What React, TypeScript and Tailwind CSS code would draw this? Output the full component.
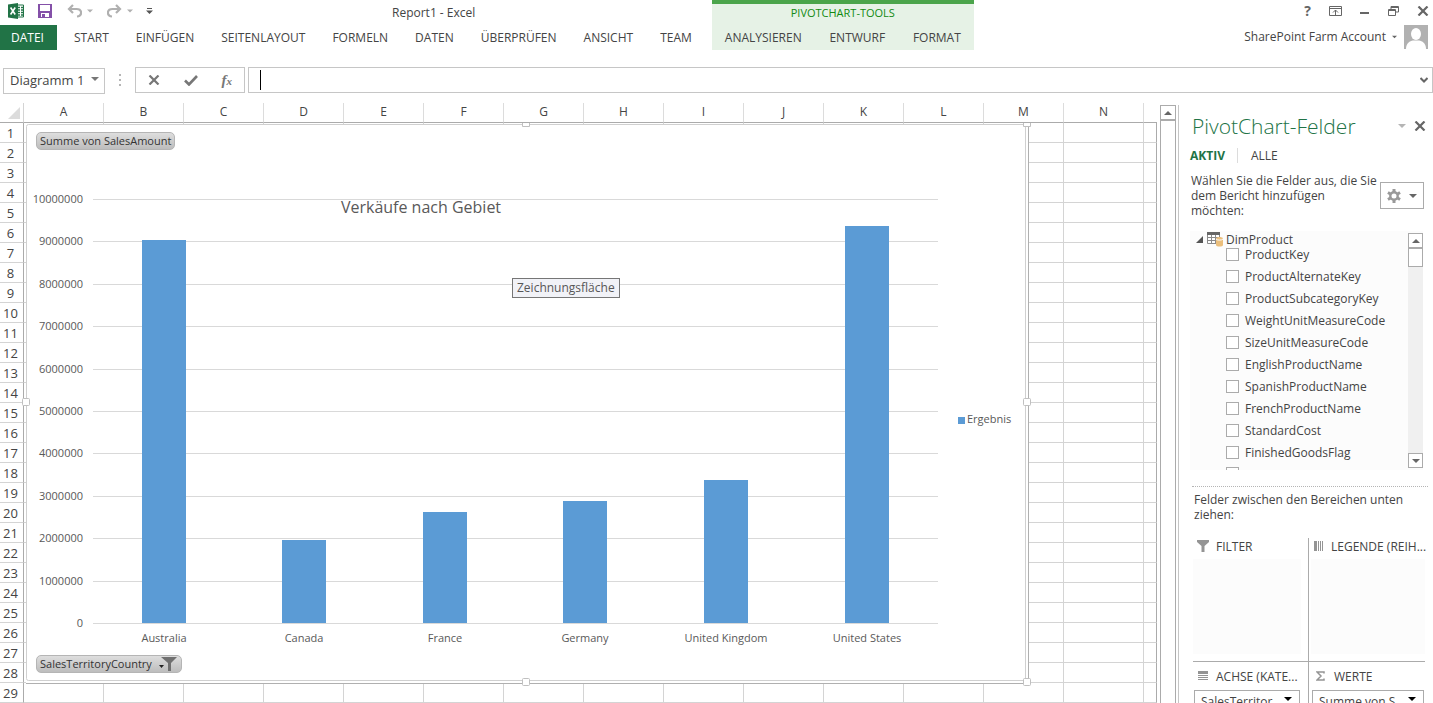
import type { ReactNode } from "react";

const ribbonTabs = ["START", "EINFÜGEN", "SEITENLAYOUT", "FORMELN", "DATEN", "ÜBERPRÜFEN", "ANSICHT", "TEAM"];
const toolTabs = ["ANALYSIEREN", "ENTWURF", "FORMAT"];
const columns = "ABCDEFGHIJKLMN".split("");
const rows = Array.from({ length: 29 }, (_, i) => i + 1);

const fields = [
  "ProductKey",
  "ProductAlternateKey",
  "ProductSubcategoryKey",
  "WeightUnitMeasureCode",
  "SizeUnitMeasureCode",
  "EnglishProductName",
  "SpanishProductName",
  "FrenchProductName",
  "StandardCost",
  "FinishedGoodsFlag",
];

const sales = [
  { country: "Australia", amount: 9040000 },
  { country: "Canada", amount: 1960000 },
  { country: "France", amount: 2620000 },
  { country: "Germany", amount: 2880000 },
  { country: "United Kingdom", amount: 3380000 },
  { country: "United States", amount: 9370000 },
];

function Caret({ className = "" }: { className?: string }) {
  return (
    <svg width="8" height="4" viewBox="0 0 8 4" className={className} aria-hidden="true">
      <path d="M0 0h8L4 4z" fill="currentColor" />
    </svg>
  );
}

function CloseIcon() {
  return (
    <svg width="12" height="10" viewBox="0 0 12 10" aria-hidden="true">
      <path d="M1.5 0.5l9 9M10.5 0.5l-9 9" stroke="currentColor" strokeWidth="2.2" />
    </svg>
  );
}

function QuickAccess() {
  return (
    <div className="flex items-center">
      <svg width="16" height="16" viewBox="0 0 16 16" aria-label="Excel">
        <path d="M9 2h6.5v12H9z" fill="#fff" stroke="#217346" />
        <path d="M10 4.5h2M13 4.5h2M10 7h2M13 7h2M10 9.5h2M13 9.5h2M10 12h2M13 12h2" stroke="#217346" strokeWidth="1.3" />
        <path d="M0 1.6L10 0v16L0 14.4z" fill="#217346" />
        <path d="M2.6 4.5l4.6 7M7.2 4.5l-4.6 7" stroke="#fff" strokeWidth="1.6" />
      </svg>
      <button aria-label="Speichern" className="ml-[14px]">
        <svg width="14" height="14" viewBox="0 0 14 14">
          <path d="M0 0h14v14H0z" fill="#8450a8" />
          <path d="M2 1h10v6H2zM3 9h8v4H3z" fill="#fff" />
          <path d="M4 10h3v3H4z" fill="#8450a8" />
        </svg>
      </button>
      <button aria-label="Rückgängig" className="ml-[15px] flex items-center gap-[5px] text-[#b0b0b0]">
        <svg width="15" height="14" viewBox="0 0 15 14">
          <path d="M6 1L2 5l4 4M2 5h7.5c6 0 6 7 0.500 7.5" fill="none" stroke="currentColor" strokeWidth="2.2" />
        </svg>
        <Caret className="w-[6px]" />
      </button>
      <button aria-label="Wiederholen" className="ml-[14px] flex items-center gap-[5px] text-[#b0b0b0]">
        <svg width="15" height="14" viewBox="0 0 15 14">
          <path d="M9 1l4 4-4 4M13 5H5.5c-6 0-6 7-0.500 7.5" fill="none" stroke="currentColor" strokeWidth="2.2" />
        </svg>
        <Caret className="w-[6px]" />
      </button>
      <button aria-label="Symbolleiste anpassen" className="ml-[13px] text-[#555]">
        <svg width="7" height="6" viewBox="0 0 7 6">
          <path d="M1 0h5v1H1zM0 2.5h7L3.5 6z" fill="currentColor" />
        </svg>
      </button>
    </div>
  );
}

function WindowButtons() {
  return (
    <div className="flex h-[22px] items-center justify-end gap-[18px] pr-[4px] text-[#666]">
      <button aria-label="Hilfe" className="text-[14px] leading-4 font-bold">?</button>
      <button aria-label="Menüband-Anzeigeoptionen">
        <svg width="13" height="10" viewBox="0 0 13 10" fill="none" stroke="currentColor">
          <path d="M0.5 0.5h12v9H0.5zM0.5 2.5h12M6.5 9V4M4 6.5L6.5 4 9 6.5" />
        </svg>
      </button>
      <button aria-label="Minimieren">
        <svg width="10" height="10" viewBox="0 0 10 10">
          <path d="M0 6h9v2H0z" fill="currentColor" />
        </svg>
      </button>
      <button aria-label="Verkleinern">
        <svg width="11" height="10" viewBox="0 0 11 10" fill="none" stroke="currentColor">
          <path d="M3 3V0.5h7.5v5.5H8M3 1.5h7.5M0.5 3.5h7v6h-7zM0.5 4.5h7" />
        </svg>
      </button>
      <button aria-label="Schließen">
        <CloseIcon />
      </button>
    </div>
  );
}

function Header() {
  return (
    <header className="flex h-[50px] shrink-0 text-[12px] text-[#444]">
      <div className="flex flex-col">
        <div className="flex h-[25px] items-center pb-[3px] pl-2">
          <QuickAccess />
          <h1 className="ml-[239px] pt-1">Report1 - Excel</h1>
        </div>
        <nav className="flex h-[25px] items-center">
          <button className="h-full w-[57px] bg-[#217346] pr-[2px] text-white">DATEI</button>
          {ribbonTabs.map((tab) => (
            <button key={tab} className="ml-[17px] pr-[10px] whitespace-nowrap">
              {tab}
            </button>
          ))}
        </nav>
      </div>
      <div className="ml-[10px] flex w-[262px] flex-col border-t-4 border-[#4ba54b] bg-[#e6f2e6]">
        <div className="flex h-[21px] items-center justify-center pb-[2px] text-[11px] text-[#138a13]">
          PIVOTCHART-TOOLS
        </div>
        <nav className="flex h-[25px] items-center justify-between px-[13px]">
          {toolTabs.map((tab) => (
            <button key={tab}>{tab}</button>
          ))}
        </nav>
      </div>
      <div className="ml-auto flex flex-col">
        <WindowButtons />
        <button className="mt-[3px] flex items-center gap-[6px] pr-[5px]">
          SharePoint Farm Account
          <Caret className="w-[5px] text-[#666]" />
          <svg width="24" height="24" viewBox="0 0 24 24" className="ml-px" aria-hidden="true">
            <path d="M0 0h24v24H0z" fill="#b1b1b1" />
            <ellipse cx="12" cy="9" rx="5" ry="6" fill="#fff" />
            <path d="M2 24c0-6 4-8 7-8.5h6c3 0.5 7 2.5 7 8.5z" fill="#fff" />
          </svg>
        </button>
      </div>
    </header>
  );
}

function FormulaBar() {
  return (
    <div className="mt-[17px] mb-[10px] flex h-[26px] shrink-0 pl-[3px] text-[#444]">
      <div className="relative w-[102px]">
        <select
          aria-label="Namenfeld"
          className="h-full w-full appearance-none border border-[#c6c6c6] bg-white pl-[6px] text-[13px]"
        >
          <option>Diagramm 1</option>
        </select>
        <Caret className="pointer-events-none absolute top-[10px] right-[6px] text-[#777]" />
      </div>
      <div className="flex w-[30px] flex-col items-center justify-center gap-[3px]">
        <i className="size-[2px] bg-[#b5b5b5]" />
        <i className="size-[2px] bg-[#b5b5b5]" />
        <i className="size-[2px] bg-[#b5b5b5]" />
      </div>
      <div className="flex w-[110px] items-center justify-around border border-[#c6c6c6] text-[#777]">
        <button aria-label="Abbrechen">
          <CloseIcon />
        </button>
        <button aria-label="Eingeben">
          <svg width="14" height="11" viewBox="0 0 14 11">
            <path d="M1 5.5l4 4L13 1" fill="none" stroke="currentColor" strokeWidth="2.6" />
          </svg>
        </button>
        <button aria-label="Funktion einfügen" className="font-['Liberation_Serif',serif] text-[15px] leading-4 font-bold italic">
          f<span className="text-[11px]">x</span>
        </button>
      </div>
      <div className="relative ml-[3px] flex flex-1 items-center border border-[#c6c6c6]">
        <i className="ml-[11px] h-5 w-px bg-black" />
        <input aria-label="Bearbeitungsleiste" className="h-full flex-1 px-1 text-[13px] outline-none" />
        <button aria-label="Bearbeitungsleiste erweitern" className="mr-[4px] text-[#666]">
          <svg width="8" height="6" viewBox="0 0 8 6">
            <path d="M0.5 1L4 4.5 7.5 1" fill="none" stroke="currentColor" strokeWidth="2" />
          </svg>
        </button>
      </div>
    </div>
  );
}

function Grid() {
  return (
    <table className="w-full table-fixed border-separate border-spacing-0 text-[13px] leading-4 text-[#444]">
      <thead>
        <tr className="h-5">
          <th className="w-6 border-r border-b border-r-[#d4d4d4] border-b-[#ababab] p-0">
            <svg width="12" height="12" viewBox="0 0 12 12" className="ml-2" aria-hidden="true">
              <path d="M12 0v12H0z" fill="#dcdcdc" />
            </svg>
          </th>
          {columns.map((col) => (
            <th
              key={col}
              className="w-[80px] border-r border-b border-r-[#dcdcdc] border-b-[#ababab] p-0 pb-px text-[12px] font-normal"
            >
              {col}
            </th>
          ))}
          <th className="border-b border-b-[#ababab] p-0" />
        </tr>
      </thead>
      <tbody>
        {rows.map((row) => (
          <tr key={row} className="h-5">
            <th className="border-r border-b border-r-[#ababab] border-b-[#d4d4d4] p-0 pr-[2px] font-normal">{row}</th>
            {columns.map((col) => (
              <td key={col} className="border-r border-b border-[#d4d4d4] p-0" />
            ))}
            <td className="border-r border-b border-r-[#ababab] border-b-[#d4d4d4] p-0" />
          </tr>
        ))}
      </tbody>
    </table>
  );
}

function FieldButton({ children, className = "" }: { children: ReactNode; className?: string }) {
  return (
    <button
      className={`absolute left-[10px] flex h-[18px] items-center rounded-[5px] border border-[#b5b5b5] bg-linear-to-b from-[#dedede] to-[#bdbdbd] px-[3px] text-[11px] leading-4 whitespace-nowrap text-[#333] ${className}`}
    >
      {children}
    </button>
  );
}

// Selection frame of the chart: a light inner and a darker outer line with grips
function PivotChart() {
  const baseline = 499;
  const unit = 424 / 10000000;
  const step = 140.6;
  const ticks = Array.from({ length: 11 }, (_, i) => i * 1000000);
  const grips = [
    [0, 278],
    [1001, 278],
    [500, 558],
    [1001, 558],
  ];

  return (
    <section className="absolute top-[21px] left-[26px] h-[560px] w-[1003px] border-r border-b border-[#b0b0b0] bg-white">
      <svg width="1006" height="563" viewBox="0 0 1006 563" className="max-w-none overflow-visible" role="img" aria-label="Verkäufe nach Gebiet">
        <rect x="0.5" y="0.5" width="999" height="556" rx="2" fill="#fff" stroke="#d0d0d0" />
        {ticks.map((tick) => {
          const y = Math.round(baseline - tick * unit);
          return (
            <g key={tick}>
              <path d={`M67 ${y + 0.5}H912`} stroke="#d9d9d9" />
              <text x="57" y={y + 4} textAnchor="end" fontSize="11" fill="#595959">
                {tick}
              </text>
            </g>
          );
        })}
        {sales.map((sale, i) => {
          const height = Math.round(sale.amount * unit);
          return (
            <g key={sale.country}>
              <rect x={116 + Math.floor(i * step)} y={baseline - height} width="44" height={height} fill="#5b9bd5" />
              <text x={138 + Math.floor(i * step)} y="518" textAnchor="middle" fontSize="11" fill="#595959">
                {sale.country}
              </text>
            </g>
          );
        })}
        <text x="395" y="89" textAnchor="middle" fontSize="16" fill="#595959">
          Verkäufe nach Gebiet
        </text>
        <rect x="932" y="293" width="7" height="7" fill="#5b9bd5" />
        <text x="941" y="299" fontSize="11" fill="#595959">
          Ergebnis
        </text>
        {/* the upper grips are half hidden by the column headers */}
        <path d="M496.5 -1V2.5H503.5V-1M997.5 -1V2.5H1004.5V-1" fill="#fff" stroke="#c0c0c0" />
        {grips.map(([x, y]) => (
          <rect key={`${x}-${y}`} x={x - 3.5} y={y - 3.5} width="7" height="7" rx="1" fill="#fff" stroke="#c0c0c0" />
        ))}
      </svg>
      <FieldButton className="top-[8px]">Summe von SalesAmount</FieldButton>
      <FieldButton className="top-[531px] gap-[7px]">
        SalesTerritoryCountry
        <svg width="19" height="14" viewBox="0 0 19 14" aria-hidden="true">
          <path d="M0 8h5L2.5 11z" fill="#222" />
          <path d="M2 0h16l-6 6v8H9V6z" fill="#707070" />
        </svg>
      </FieldButton>
      <div className="absolute top-[154px] left-[486px] h-5 border border-[#767676] bg-[#f1f2f7] px-[4px] text-[12px] leading-[18px] text-[#575757]">
        Zeichnungsfläche
      </div>
    </section>
  );
}

function ScrollButton({ label, down = false }: { label: string; down?: boolean }) {
  return (
    <button aria-label={label} className="flex h-[15px] w-full shrink-0 items-center justify-center border border-[#ababab] bg-white text-[#666]">
      <Caret className={down ? "" : "rotate-180"} />
    </button>
  );
}

function FieldList() {
  return (
    <div className="mt-[13px] mr-[10px] ml-[11px] flex h-[239px] bg-[#fcfcfc]">
      <div className="flex-1 overflow-hidden">
        <div className="flex h-4 items-center pl-[6px]">
          <svg width="7" height="7" viewBox="0 0 7 7" aria-hidden="true">
            <path d="M7 0v7H0z" fill="#555" />
          </svg>
          <svg width="17" height="15" viewBox="0 0 17 15" className="ml-[4px]" aria-hidden="true">
            <path d="M0.5 2.5h12v9H0.5zM0.5 5.5h12M0.5 8.5h12M4.5 3v9M8.5 3v9" fill="#fff" stroke="#8a8a8a" />
            <path d="M0 0h13v3H0z" fill="#666" />
            <path d="M9 6.5c0-2 7-2 7 0V13c0 2-7 2-7 0z" fill="#ebbf7d" />
            <path d="M9 7c1 1.5 6 1.5 7 0" fill="none" stroke="#fff" />
          </svg>
          <span className="ml-[2px]">DimProduct</span>
        </div>
        <ul className="-mt-[4px]">
          {fields.map((field) => (
            <li key={field}>
              <label className="flex h-[22px] items-center pl-[36px]">
                <input type="checkbox" className="size-[13px] appearance-none border border-[#ababab] bg-white" />
                <span className="ml-[6px]">{field}</span>
              </label>
            </li>
          ))}
          <li className="pt-[4px] pl-[36px]">
            <input type="checkbox" aria-label="Weiteres Feld" className="block size-[13px] appearance-none border border-[#ababab] bg-white" />
          </li>
        </ul>
      </div>
      <div className="my-[2px] flex w-[15px] flex-col bg-[#f0f0f0]">
        <ScrollButton label="Nach oben" />
        <div className="h-[19px] border border-[#ababab] bg-white" />
        <div className="mt-auto">
          <ScrollButton label="Nach unten" down />
        </div>
      </div>
    </div>
  );
}

function Zone({ icon, title, value, className = "" }: { icon: ReactNode; title: string; value?: string; className?: string }) {
  return (
    <div className={`h-[124px] ${className}`}>
      <div className="flex h-4 items-center gap-[7px] pl-[3px] whitespace-nowrap">
        <span className="flex w-[13px] justify-center text-[#949494]">{icon}</span>
        {title}
      </div>
      {value ? (
        <div className="relative mx-px mt-[6px]">
          <select aria-label={title} className="h-[22px] w-full appearance-none border border-[#ababab] bg-white pl-[6px]">
            <option>{value}</option>
          </select>
          <Caret className="pointer-events-none absolute top-[7px] right-[8px] text-black" />
        </div>
      ) : (
        <div className="mt-[5px] h-[95px] bg-[#fcfcfc]" />
      )}
    </div>
  );
}

function FieldPane() {
  return (
    <aside className="mt-[2px] ml-[2px] w-[255px] shrink-0 border-l border-[#c6c6c6] text-[12px] leading-[15px] text-[#444]">
      <div className="flex h-[41px] items-center pt-[2px] pb-px pl-[13px]">
        <h2 className="text-[21px] leading-7 font-light text-[#217346]">PivotChart-Felder</h2>
        <button aria-label="Aufgabenbereichsoptionen" className="ml-auto text-[#b5b5b5]">
          <Caret />
        </button>
        <button aria-label="Bereich schließen" className="mr-[7px] ml-[8px] text-[#666]">
          <CloseIcon />
        </button>
      </div>
      <div className="flex h-[18px] items-center pl-[11px]">
        <button className="border-r border-[#dcdcdc] pr-[12px] font-bold text-[#217346]">AKTIV</button>
        <button className="pl-[13px]">ALLE</button>
      </div>
      <div className="mt-[9px] flex justify-between pr-[9px] pl-[12px]">
        <p className="whitespace-nowrap">
          Wählen Sie die Felder aus, die Sie
          <br />
          dem Bericht hinzufügen
          <br />
          möchten:
        </p>
        <button
          aria-label="Extras"
          className="mt-[9px] flex h-[27px] w-[44px] shrink-0 items-center justify-center gap-[8px] border border-[#ababab] text-[#666]"
        >
          <svg width="14" height="14" viewBox="0 0 14 14" aria-hidden="true">
            <circle cx="7" cy="7" r="3.7" fill="none" stroke="#999" strokeWidth="2.4" />
            <path d="M5.5 0h3v3h-3zM5.5 11h3v3h-3zM0.2 4.8l1.5-2.6 2.5 1.5-1.5 2.6zM9.8 10.3l1.5-2.6 2.5 1.5-1.5 2.6zM0.2 9.2l1.5 2.6 2.5-1.5-1.5-2.6zM9.8 3.7l1.5 2.6 2.5-1.5-1.5-2.6z" fill="#999" />
          </svg>
          <Caret />
        </button>
      </div>
      <FieldList />
      <div className="mt-[16px] mr-[5px] ml-[13px] border-t border-dotted border-[#b5b5b5]" />
      <p className="mt-[5px] ml-[15px] whitespace-nowrap">
        Felder zwischen den Bereichen unten
        <br />
        ziehen:
      </p>
      <div className="mt-[16px] mr-[8px] ml-[14px] grid grid-cols-2">
        <Zone
          title="FILTER"
          className="border-r border-b border-[#ababab] pr-[7px]"
          icon={
            <svg width="12" height="12" viewBox="0 0 12 12">
              <path d="M0 0h12v2L7.5 6v6h-3V6L0 2z" fill="currentColor" />
            </svg>
          }
        />
        <Zone
          title="LEGENDE (REIH..."
          className="border-b border-[#ababab] pl-[2px]"
          icon={
            <svg width="10" height="10" viewBox="0 0 10 10">
              <path d="M0 0h3v10H0zM4 0h1v10H4zM6 0h1v10H6zM8 0h1v10H8z" fill="currentColor" />
            </svg>
          }
        />
        <Zone
          title="ACHSE (KATE..."
          value="SalesTerritor..."
          className="border-r border-[#ababab] pt-[6px] pr-[7px]"
          icon={
            <svg width="10" height="10" viewBox="0 0 10 10">
              <path d="M0 0h10v3H0zM0 4h10v1H0zM0 6h10v1H0zM0 8h10v1H0z" fill="currentColor" />
            </svg>
          }
        />
        <Zone
          title="WERTE"
          value="Summe von S..."
          className="pt-[6px] pl-[2px]"
          icon={
            <svg width="9" height="10" viewBox="0 0 9 10">
              <path d="M8 2.5V1H1l4 4-4 4h7V7.5" fill="none" stroke="currentColor" strokeWidth="1.5" />
            </svg>
          }
        />
      </div>
    </aside>
  );
}

export default function App() {
  return (
    <div className="flex h-screen flex-col overflow-hidden bg-white font-['Open_Sans','Noto_Sans',sans-serif]">
      <Header />
      <FormulaBar />
      <main className="flex min-h-0 flex-1">
        <div className="relative min-w-0 flex-1 overflow-hidden">
          <Grid />
          <PivotChart />
        </div>
        <div className="mt-[2px] ml-[3px] flex w-[16px] flex-col">
          <ScrollButton label="Bildlauf nach oben" />
          <div className="flex-1 border-x border-t border-[#ababab]" />
        </div>
        <FieldPane />
      </main>
    </div>
  );
}
